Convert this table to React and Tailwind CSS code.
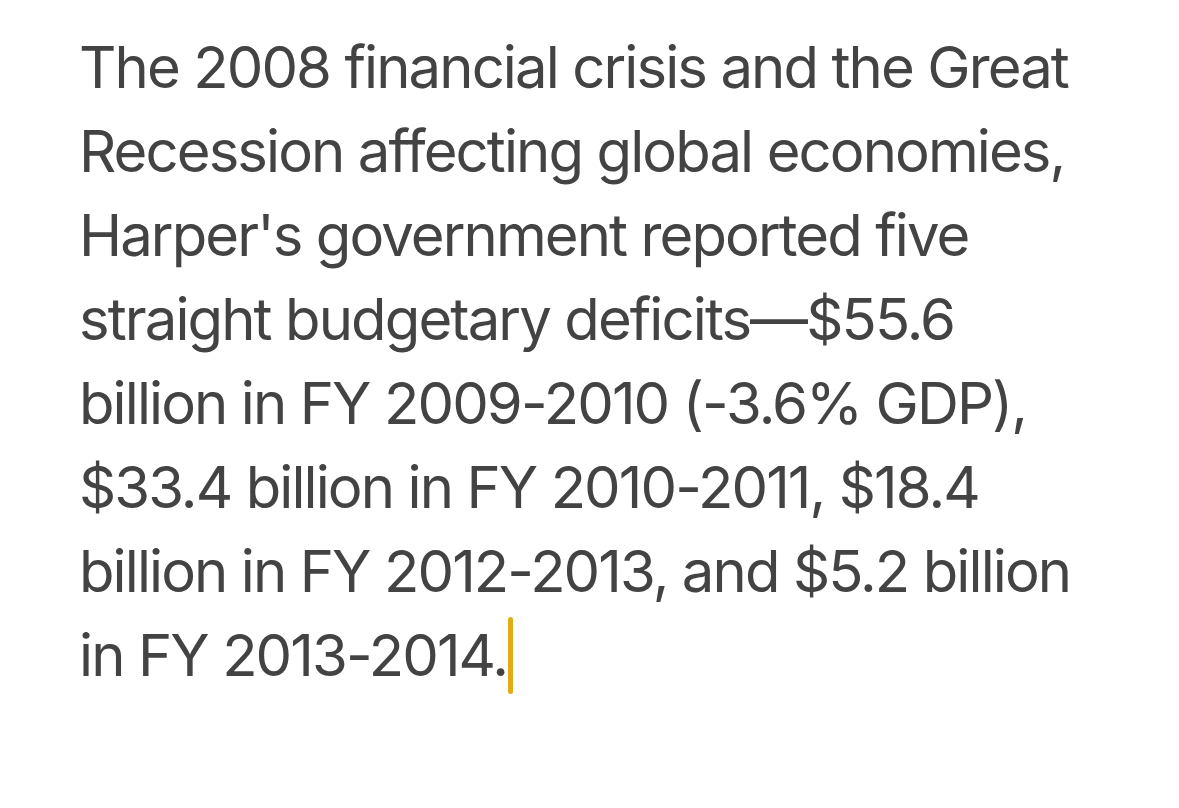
import React from "react";

const lines = [
  "The 2008 financial crisis and the Great",
  "Recession affecting global economies,",
  "Harper's government reported five",
  "straight budgetary deficits\u2014$55.6",
  "billion in FY 2009-2010 (-3.6% GDP),",
  "$33.4 billion in FY 2010-2011, $18.4",
  "billion in FY 2012-2013, and $5.2 billion",
];

export default function App() {
  return (
    <div className="w-[1179px] h-[808px] bg-white overflow-hidden">
      <div
        className="pt-[25px] pl-[79px] text-[58px] leading-[84px] tracking-[-1.9px] text-[#434343]"
        style={{ fontFamily: "Inter, 'Noto Sans', sans-serif" }}
      >
        {lines.map((l) => (
          <div key={l} className="whitespace-nowrap">
            {l}
          </div>
        ))}
        <div className="whitespace-nowrap flex items-center">
          <span>in FY 2013-2014.</span>
          <span className="inline-block w-[5px] h-[77px] rounded-full bg-[#e2ad14] ml-[1px]" />
        </div>
      </div>
    </div>
  );
}
